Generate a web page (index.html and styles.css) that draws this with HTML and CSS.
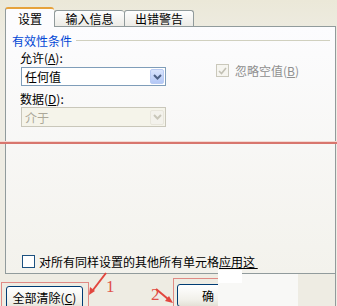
FILE: index.html
```html
<!DOCTYPE html>
<html lang="zh-CN">
<head>
    <meta charset="UTF-8">
    <title>数据有效性</title>
    <link rel="stylesheet" href="styles.css">
</head>
<body>
    <div class="dialog">
        <!-- tab strip -->
        <div class="tabs">
            <div class="tab active">设置</div>
            <div class="tab">输入信息</div>
            <div class="tab last">出错警告</div>
        </div>

        <!-- settings page -->
        <div class="panel">
            <div class="group-title">
                <span>有效性条件</span>
                <i class="rule"></i>
            </div>
            <div class="fields">
                <div class="left-col">
                    <label class="field-label">允许(<u>A</u>):</label>
                    <div class="combo">
                        <span>任何值</span>
                        <b class="drop"><svg width="9" height="6" viewBox="0 0 9 6"><path d="M1 1l3.5 3.5L8 1" fill="none" stroke="#4d6185" stroke-width="2"/></svg></b>
                    </div>
                    <label class="field-label second">数据(<u>D</u>):</label>
                    <div class="combo disabled">
                        <span>介于</span>
                        <b class="drop"><svg width="9" height="6" viewBox="0 0 9 6"><path d="M1 1l3.5 3.5L8 1" fill="none" stroke="#c9c7ba" stroke-width="2"/></svg></b>
                    </div>
                </div>
                <div class="ignore">
                    <span class="cb checked"><svg width="9" height="8" viewBox="0 0 9 8"><path d="M1 4l2.5 2.5L8 1" fill="none" stroke="#c2c0b4" stroke-width="1.6"/></svg></span>
                    <span>忽略空值(<u>B</u>)</span>
                </div>
            </div>
            <div class="apply-all">
                <span class="cb"></span>
                <span>对所有同样设置的其他所有单元格<u>应用这&nbsp;</u></span>
            </div>
        </div>

        <div class="footer">
            <button class="btn clear">全部清除(<u>C</u>)</button>
            <button class="btn ok">确</button>
        </div>
    </div>

    <!-- annotations drawn over the screenshot -->
    <div class="mark-line"></div>
    <div class="mark-box box-one"></div>
    <div class="mark-box box-two"></div>
    <div class="patch patch-a"></div>
    <div class="patch patch-b"></div>
    <span class="num num-one">1</span>
    <span class="num num-two">2</span>
    <svg class="arrows" width="337" height="306" viewBox="0 0 337 306">
        <path d="M106 273L93 290" stroke="#e2463e" stroke-width="2"/>
        <path d="M89 295l1-8 5 4z" fill="#e2463e"/>
        <path d="M156 289L168 299" stroke="#e2463e" stroke-width="2"/>
        <path d="M173 303l-8-2 4-5z" fill="#e2463e"/>
    </svg>
</body>
</html>
```

FILE: styles.css
```css
* {
    margin: 0;
    padding: 0;
    box-sizing: border-box;
}

body {
    width: 337px;
    height: 306px;
    overflow: hidden;
    position: relative;
    font-family: "Noto Sans CJK SC", "Liberation Sans", sans-serif;
    font-size: 12px;
    color: #000;
    background: #eeece3;
}

.dialog {
    height: 306px;
    background: linear-gradient(#ebe8d8, #eeece3 40px);
}

.tabs {
    display: flex;
    align-items: flex-end;
    height: 26px;
    padding-left: 5px;
}

.tab {
    height: 16px;
    line-height: 15px;
    text-align: center;
    width: 70px;
    border: 1px solid #919b9c;
    border-right: none;
    border-bottom: none;
    border-radius: 3px 3px 0 0;
    background: linear-gradient(#fefefe, #ecebe6);
}

.tab.last {
    border-right: 1px solid #919b9c;
}

.tab.active {
    width: 49px;
    height: 20px;
    line-height: 19px;
    margin-bottom: -1px;
    position: relative;
    z-index: 1;
    background: #fcfcfe;
    border-top: 2px solid #e6a23c;
}

.panel {
    margin-left: 5px;
    width: 331px;
    height: 248px;
    border: 1px solid #919b9c;
    background: linear-gradient(#fcfcfe, #f3f2ec);
    display: flex;
    flex-direction: column;
    padding: 6px 5px 5px 6px;
}

.group-title {
    display: flex;
    align-items: center;
    height: 14px;
    color: #0046d5;
}

.group-title .rule {
    flex: 1;
    height: 1px;
    margin-left: 4px;
    background: #d0d0bf;
}

.fields {
    display: flex;
    padding-left: 8px;
}

.left-col {
    width: 146px;
}

.field-label {
    display: block;
    height: 14px;
    line-height: 14px;
    margin-top: 4px;
}

.field-label.second {
    margin-top: 6px;
}

.combo {
    display: flex;
    align-items: center;
    justify-content: space-between;
    margin-top: 2px;
    margin-left: 1px;
    height: 19px;
    border: 1px solid #7f9db9;
    background: #fff;
    padding: 0 1px 0 3px;
}

.combo.disabled {
    height: 20px;
    margin-top: 1px;
    border-color: #c9c7ba;
    background: #f5f4ea;
    color: #aca899;
}

.drop {
    display: flex;
    align-items: center;
    justify-content: center;
    width: 14px;
    height: 15px;
    border: 1px solid #b9cbf3;
    border-radius: 2px;
    background: linear-gradient(#d9e4fd, #b4c8f6);
}

.combo.disabled .drop {
    border-color: #e8e6dc;
    background: #f3f2ec;
}

.ignore {
    display: flex;
    align-items: center;
    gap: 6px;
    margin-left: 50px;
    margin-top: 17px;
    height: 13px;
    color: #8f8f8f;
}

.cb {
    display: flex;
    align-items: center;
    justify-content: center;
    width: 13px;
    height: 13px;
    border: 1px solid #1c5180;
    background: #fff;
}

.cb.checked {
    border-color: #cac8bb;
    background: #f6f5f0;
}

.apply-all {
    margin-top: auto;
    display: flex;
    align-items: center;
    gap: 4px;
    padding-left: 10px;
    height: 13px;
}

.footer {
    margin-left: 5px;
    width: 331px;
    height: 32px;
    overflow: hidden;
    border-right: 1px solid #919b9c;
    position: relative;
}

.btn {
    position: absolute;
    font-family: inherit;
    font-size: 12px;
    height: 23px;
    border: 1px solid #003c74;
    border-radius: 3px;
    background: linear-gradient(#fff, #f1f0ea 70%, #e3e1d6);
    color: #000;
}

.btn.clear {
    left: 1px;
    top: 12px;
    width: 77px;
}

.btn.ok {
    left: 172px;
    top: 10px;
    width: 75px;
    text-align: left;
    padding-left: 24px;
}

.mark-line {
    position: absolute;
    left: 0;
    top: 141px;
    width: 337px;
    height: 3px;
    border-top: 1px solid #f4d8d2;
    background: #d8766e;
}

.mark-box {
    position: absolute;
    border: 1px solid #e08a84;
    border-bottom: none;
}

.box-one {
    left: 1px;
    top: 282px;
    width: 88px;
    height: 24px;
}

.box-two {
    left: 173px;
    top: 278px;
    width: 80px;
    height: 28px;
}

.patch {
    position: absolute;
    left: 218px;
}

.patch-a {
    top: 270px;
    width: 24px;
    height: 13px;
    background: #fff;
    z-index: 2;
}

.patch-b {
    top: 274px;
    width: 80px;
    height: 32px;
    background: #f8f8f6;
}

.num {
    position: absolute;
    font-family: "Liberation Serif", serif;
    font-size: 17px;
    line-height: 17px;
    color: #e05048;
}

.num-one {
    left: 106px;
    top: 278px;
}

.num-two {
    left: 151px;
    top: 286px;
}

.arrows {
    position: absolute;
    left: 0;
    top: 0;
}
```
